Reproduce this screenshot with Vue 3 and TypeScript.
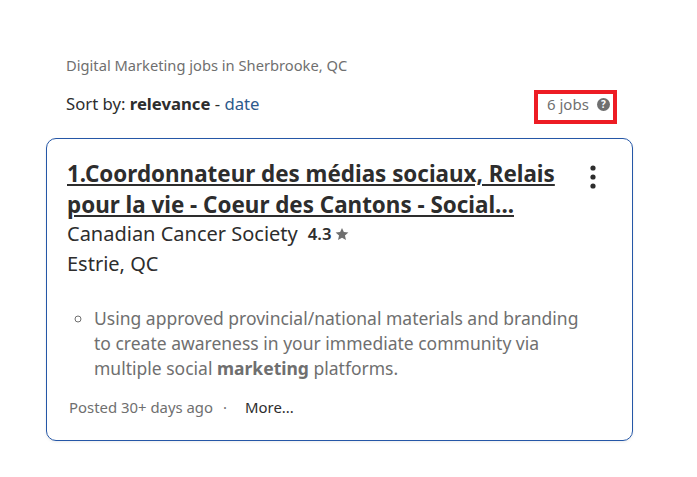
<template>
  <main class="page">
    <p class="heading">Digital Marketing jobs in Sherbrooke, QC</p>
    <div class="sort-row">
      <div class="sort">Sort by: <strong>relevance</strong> - <a class="link">date</a></div>
      <div class="count">
        <span>{{ jobs }} jobs</span>
        <span class="help">?</span>
      </div>
    </div>
    <article class="card">
      <div class="title-row">
        <h2 class="title">1.Coordonnateur des médias sociaux, Relais pour la vie - Coeur des Cantons - Social...</h2>
        <svg class="menu" width="6" height="24" viewBox="0 0 6 24">
          <circle cx="3" cy="3" r="2.6" />
          <circle cx="3" cy="12" r="2.6" />
          <circle cx="3" cy="21" r="2.6" />
        </svg>
      </div>
      <div class="company">
        Canadian Cancer Society
        <span class="rating">4.3</span>
        <svg class="star" width="14" height="14" viewBox="0 0 24 24">
          <path d="M12 1.5l3.2 7.2 7.8.8-5.9 5.2 1.7 7.7L12 18.4l-6.8 4 1.7-7.7L1 9.5l7.8-.8z" />
        </svg>
      </div>
      <div class="location">Estrie, QC</div>
      <ul class="snippet">
        <li>Using approved provincial/national materials and branding to create awareness in your immediate community via multiple social <strong>marketing</strong> platforms.</li>
      </ul>
      <div class="footer">
        <span>Posted 30+ days ago</span>
        <span class="dot">·</span>
        <a class="more">More...</a>
      </div>
    </article>
  </main>
</template>

<script setup lang="ts">
const jobs = 6
</script>

<style>
html, body { background: #fff; }
</style>

<style scoped>
.page {
  width: 697px;
  height: 477px;
  box-sizing: border-box;
  padding: 56px 0 0 46px;
  font-family: "Noto Sans", sans-serif;
  color: #2d2d2d;
  overflow: hidden;
}
.heading { margin: 0 0 0 20px; font-size: 14.7px; line-height: 19px; color: #6f6f6f; }
.sort-row {
  display: flex;
  justify-content: space-between;
  align-items: flex-start;
  width: 551px;
  margin: 15px 0 0 20px;
}
.sort { margin-top: 3px; font-size: 16.7px; line-height: 22px; color: #2d2d2d; }
.sort strong { font-weight: 700; }
.link { color: #2d5a8c; }
.count {
  display: flex;
  align-items: center;
  gap: 8px;
  box-sizing: border-box;
  height: 34px;
  width: 83px;
  padding: 0 0 6px 9px;
  border: 4px solid #ed1c24;
  font-size: 15px;
  color: #6f6f6f;
}
.help {
  display: inline-flex;
  align-items: center;
  justify-content: center;
  width: 13px;
  height: 13px;
  border-radius: 50%;
  background: #6f6f6f;
  color: #fff;
  font-size: 10px;
  font-weight: 700;
}
.card {
  box-sizing: border-box;
  width: 587px;
  height: 303px;
  margin-top: 14px;
  padding: 19px 20px 0 20px;
  border: 1px solid #2557a7;
  border-radius: 10px;
  box-shadow: 0 1px 3px rgba(0, 0, 0, 0.08);
}
.title-row { display: flex; justify-content: space-between; align-items: flex-start; }
.title {
  margin: 0;
  width: 500px;
  font-size: 22.4px;
  line-height: 31px;
  font-weight: 700;
  text-decoration: underline;
  color: #2d2d2d;
}
.menu { fill: #2d2d2d; margin: 7px 16px 0 0; }
.company { display: flex; align-items: center; margin-top: -1px; font-size: 20px; line-height: 30px; }
.rating { margin-left: 10px; font-size: 16.7px; font-weight: 600; }
.star { fill: #6f6f6f; margin-left: 4px; }
.location { font-size: 20px; line-height: 30px; }
.snippet {
  margin: 27px 0 0;
  padding: 0 0 0 27px;
  width: 490px;
  list-style: circle;
  font-size: 17.5px;
  line-height: 25px;
  color: #6f6f6f;
}
.footer { margin-top: 16px; margin-left: 2px; font-size: 14.9px; line-height: 20px; color: #6f6f6f; }
.dot { margin: 0 10px; }
.more { margin-left: 8px; color: #2d2d2d; }
</style>
